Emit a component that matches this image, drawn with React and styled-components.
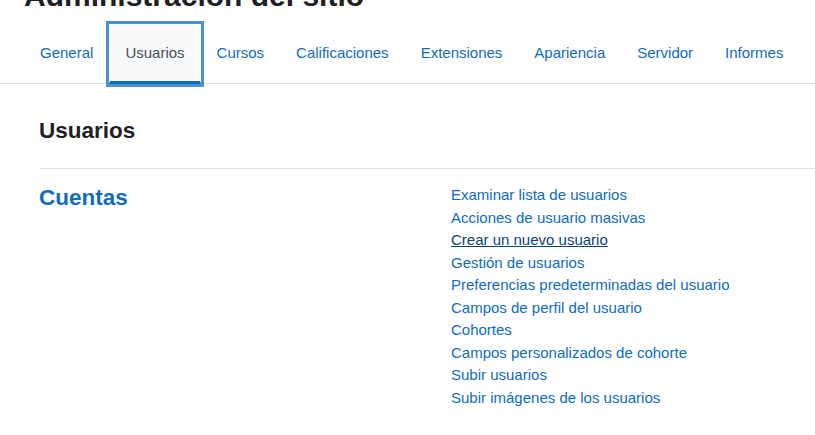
import React from "react";
import styled, { createGlobalStyle } from "styled-components";

const tabs = ["General", "Usuarios", "Cursos", "Calificaciones", "Extensiones", "Apariencia", "Servidor", "Informes"];

const links = [
    "Examinar lista de usuarios",
    "Acciones de usuario masivas",
    "Crear un nuevo usuario",
    "Gestión de usuarios",
    "Preferencias predeterminadas del usuario",
    "Campos de perfil del usuario",
    "Cohortes",
    "Campos personalizados de cohorte",
    "Subir usuarios",
    "Subir imágenes de los usuarios",
];

const App = () => {
    return (
        <>
            <GlobalStyle />
            <Page>
                <Title>Administración del sitio</Title>
                <TabBar>
                    {tabs.map((t) => (
                        <Tab key={t} $active={t === "Usuarios"} href="#">{t}</Tab>
                    ))}
                </TabBar>
                <Section>
                    <SectionTitle>Usuarios</SectionTitle>
                    <Divider />
                    <Category>
                        <CategoryTitle>Cuentas</CategoryTitle>
                        <LinkList>
                            {links.map((l) => (
                                <li key={l}>
                                    <ListLink $hover={l === "Crear un nuevo usuario"} href="#">{l}</ListLink>
                                </li>
                            ))}
                        </LinkList>
                    </Category>
                </Section>
            </Page>
        </>
    );
};

export default App;

const GlobalStyle = createGlobalStyle`
    html, body {
        margin: 0;
        padding: 0;
        background: #fff;
        overflow: hidden;
    }
    body {
        font-family: "Liberation Sans", Arial, sans-serif;
        font-size: 15px;
        line-height: 1.5;
        color: #1d2125;
    }
`;

const Page = styled.div`
    width: 815px;
    height: 435px;
    overflow: hidden;
`;

const Title = styled.h1`
    margin: -22px 0 0;
    padding-left: 24px;
    font-size: 30px;
    font-weight: 700;
    line-height: 36px;
    height: 36px;
    color: #1d2125;
    white-space: nowrap;
`;

const TabBar = styled.nav`
    display: flex;
    margin-top: 10px;
    padding-left: 24px;
    height: 59px;
    border-bottom: 1px solid #dee2e6;
`;

const Tab = styled.a`
    display: flex;
    align-items: center;
    box-sizing: border-box;
    height: 60px;
    margin-bottom: -1px;
    padding: 0 15px;
    border: 1px solid transparent;
    border-bottom: 3px solid ${(p) => (p.$active ? "#0f6cbf" : "transparent")};
    background: ${(p) => (p.$active ? "#f8f9fa" : "transparent")};
    color: ${(p) => (p.$active ? "#495057" : "#0f6cbf")};
    box-shadow: ${(p) => (p.$active ? "0 0 0 3px rgba(15,108,191,.75)" : "none")};
    font-size: 15px;
    line-height: 22.5px;
    text-decoration: none;
    white-space: nowrap;
`;

const Section = styled.section`
    padding: 33px 0 0 39px;
`;

const SectionTitle = styled.h3`
    margin: 0;
    font-size: 22.5px;
    font-weight: 700;
    line-height: 27px;
`;

const Divider = styled.hr`
    margin: 24px 0 0;
    border: 0;
    border-top: 1px solid #dee2e6;
`;

const Category = styled.div`
    display: grid;
    grid-template-columns: 412px 1fr;
    padding-top: 15px;
`;

const CategoryTitle = styled.h4`
    margin: 0;
    font-size: 22.5px;
    font-weight: 700;
    line-height: 27px;
    color: #0f6cbf;
`;

const LinkList = styled.ul`
    margin: 0;
    padding: 0;
    list-style: none;
    line-height: 22.5px;
`;

const ListLink = styled.a`
    color: ${(p) => (p.$hover ? "#094478" : "#0f6cbf")};
    text-decoration: ${(p) => (p.$hover ? "underline" : "none")};
`;
